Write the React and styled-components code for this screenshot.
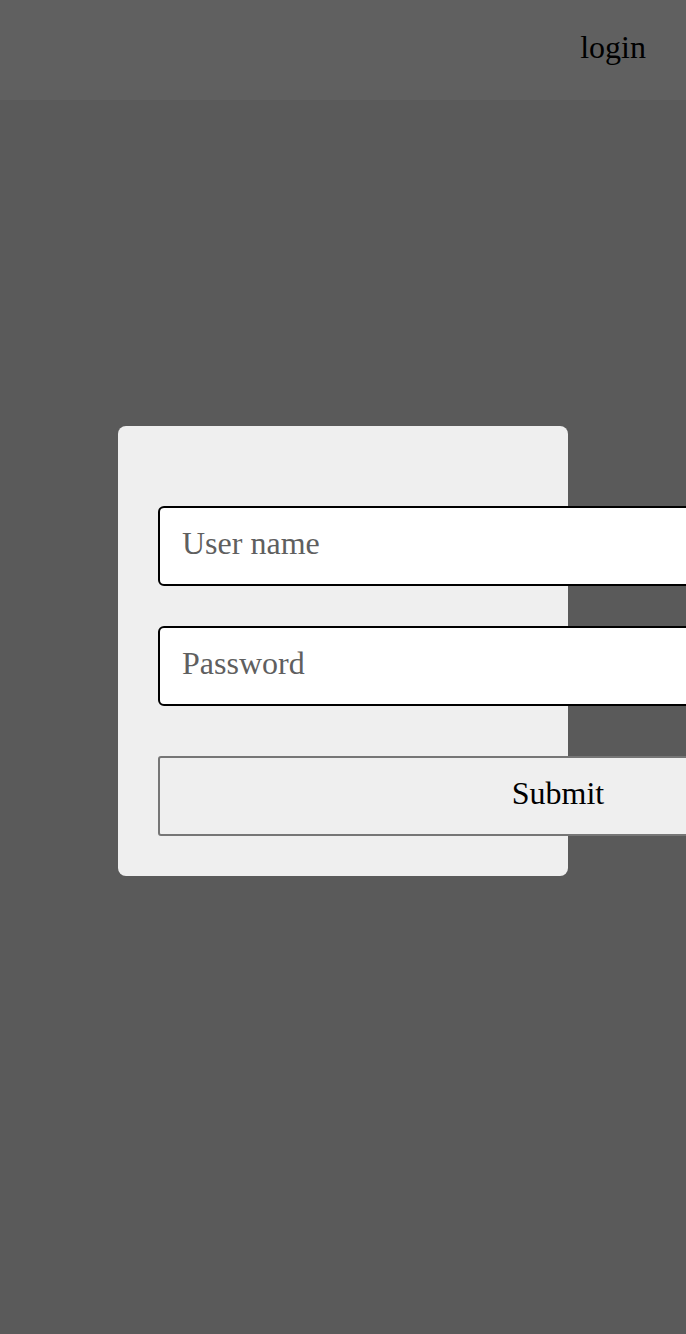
import React from 'react'
import styled, { createGlobalStyle } from 'styled-components'

const GlobalStyle = createGlobalStyle`
  html, body {
    margin: 0;
    padding: 0;
    background-color: #5a5a5a;
    font-family: 'Liberation Serif', 'Times New Roman', serif;
    overflow: hidden;
  }
`

const Page = styled.div`
  width: 686px;
  min-height: 1334px;
  background-color: #5a5a5a;
`

const Header = styled.header`
  height: 100px;
  background-color: #606060;
  display: flex;
  align-items: center;
  justify-content: flex-end;
  padding: 0 40px;
  box-sizing: border-box;
`

const HeaderLink = styled.span`
  font-size: 32px;
  color: #000000;
  line-height: 1;
  transform: translateY(-3px);
`

const Main = styled.main`
  padding: 326px 0 0 118px;
`

const Card = styled.form`
  width: 450px;
  height: 450px;
  box-sizing: border-box;
  background-color: #efefef;
  border-radius: 8px;
  padding: 80px 40px 40px;
  display: flex;
  flex-direction: column;
  gap: 40px;
`

const Field = styled.input`
  width: 800px;
  height: 80px;
  flex-shrink: 0;
  box-sizing: border-box;
  border: 2px solid #000000;
  border-radius: 6px;
  background: #ffffff;
  padding: 0 22px 6px;
  font-family: 'Liberation Serif', 'Times New Roman', serif;
  font-size: 32px;
  outline: none;

  &::placeholder {
    color: #5f5f5f;
  }
`

const SubmitButton = styled.button`
  width: 800px;
  height: 80px;
  flex-shrink: 0;
  margin-top: 10px;
  box-sizing: border-box;
  border: 2px solid #767676;
  border-radius: 3px;
  background: #efefef;
  color: #000000;
  padding: 0 0 6px;
  font-family: 'Liberation Serif', 'Times New Roman', serif;
  font-size: 32px;
`

export default function App() {
  return (
    <Page>
      <GlobalStyle />
      <Header>
        <HeaderLink>login</HeaderLink>
      </Header>
      <Main>
        <Card onSubmit={e => e.preventDefault()}>
          <Field type='text' placeholder='User name' />
          <Field type='password' placeholder='Password' />
          <SubmitButton type='submit'>Submit</SubmitButton>
        </Card>
      </Main>
    </Page>
  )
}
